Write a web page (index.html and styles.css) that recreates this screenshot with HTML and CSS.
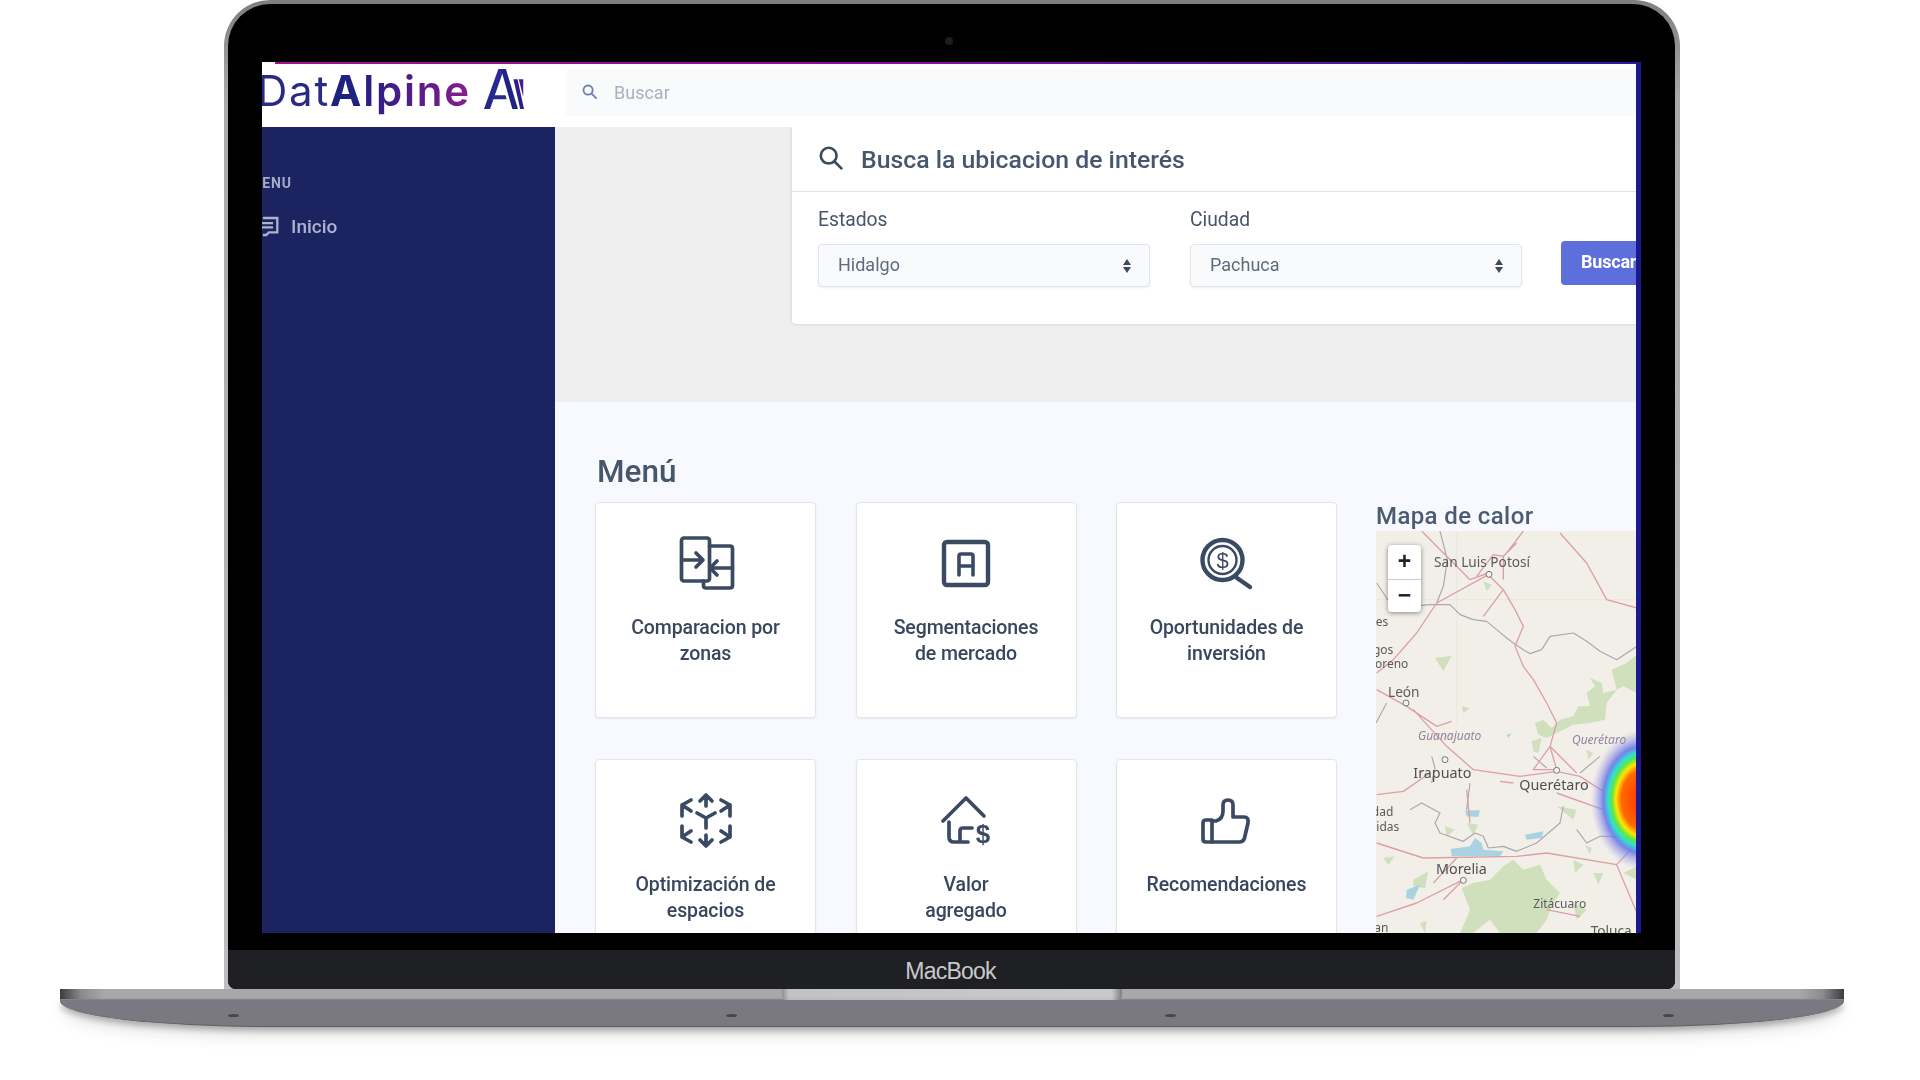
FILE: index.html
```html
<!DOCTYPE html>
<html lang="es">
<head>
<meta charset="utf-8">
<title>DatAlpine</title>
<link rel="stylesheet" href="styles.css">
</head>
<body>
<div class="laptop">
  <div class="lid">
    <div class="bezel">
      <span class="camera"></span>
      <div class="screen">
        <div class="top-line"></div>
        <header class="app-header">
          <div class="brand">
            <span class="logo-text"><span class="logo-thin">Dat</span><span class="logo-a">A</span><span class="logo-rest">lpine</span></span>
            <svg class="logo-mark" viewBox="700 40 106 110" preserveAspectRatio="none">
              <defs><linearGradient id="lg" x1="0" x2="1" y1="1" y2="0"><stop offset="0" stop-color="#1d2a86"/><stop offset="1" stop-color="#2f2a9a"/></linearGradient></defs>
              <path d="M700 150 L738 40 L753 40 L716 150 Z" fill="url(#lg)"/>
              <path d="M745 40 L758 40 L790 150 L775 150 Z" fill="#1f2384"/>
              <path d="M723 112 H757 L760 123 H719 Z" fill="#2b2a8c"/>
              <path d="M778 68 L789 68 L806 150 L796 150 Z" fill="#2a1f88"/>
              <path d="M792 68 H804 V116 Z" fill="#4a1d8c"/>
            </svg>
          </div>
          <div class="search-wrap">
            <div class="search-bar">
              <svg class="search-icon" viewBox="0 0 24 24"><circle cx="10" cy="10" r="6.5"/><path d="M15 15 L22 22"/></svg>
              <span class="search-text">Buscar</span>
            </div>
          </div>
        </header>
        <aside class="sidebar">
          <div class="side-label">MENU</div>
          <div class="side-item">
            <svg class="side-icon" viewBox="0 0 20 24"><path d="M1 2 H18 V19 H8 L5 22 H1 M-2 8 H13 M-2 13 H13"/></svg>
            <span>Inicio</span>
          </div>
        </aside>
        <main class="main">
          <section class="band">
            <div class="finder">
              <div class="finder-head">
                <svg class="finder-icon" viewBox="0 0 28 28"><circle cx="11.5" cy="11.5" r="8.5"/><path d="M18 18 L26 26"/></svg>
                <h2 class="finder-title">Busca la ubicacion de interés</h2>
              </div>
              <div class="finder-body">
                <div class="field">
                  <div class="field-label">Estados</div>
                  <div class="select"><span>Hidalgo</span><svg class="updown" viewBox="0 0 10 16"><path d="M5 1 L9 7 H1 Z M5 15 L1 9 H9 Z"/></svg></div>
                </div>
                <div class="field">
                  <div class="field-label">Ciudad</div>
                  <div class="select"><span>Pachuca</span><svg class="updown" viewBox="0 0 10 16"><path d="M5 1 L9 7 H1 Z M5 15 L1 9 H9 Z"/></svg></div>
                </div>
                <div class="btn">Buscar</div>
              </div>
            </div>
          </section>
          <section class="lower">
            <div class="menu-col">
              <h2 class="menu-title">Menú</h2>
              <div class="menu-grid">
                <div class="tile">
                  <svg class="tile-icon" viewBox="0 0 60 60"><rect x="5.5" y="5" width="28" height="43" rx="2.5"/><path d="M33.5 13 H54 Q56.5 13 56.5 15.5 V52.5 Q56.5 55 54 55 H30 Q27.5 55 27.5 52.5 V48"/><path d="M5.5 27 H26 M20 20 L27 27 L20 34 M56.5 35 H34 M41 28 L34 35 L41 42"/></svg>
                  <div class="tile-text">Comparacion por<br>zonas</div>
                </div>
                <div class="tile">
                  <svg class="tile-icon heavy" viewBox="0 0 60 60"><rect x="8" y="9" width="44" height="43" rx="3"/><path class="mid" d="M23 42 V23 Q23 21 25 21 H35 Q37 21 37 23 V42 M23 33 H37"/></svg>
                  <div class="tile-text">Segmentaciones<br>de mercado</div>
                </div>
                <div class="tile">
                  <svg class="tile-icon heavy" viewBox="0 0 60 60"><circle cx="25.5" cy="27" r="20"/><circle class="thin" cx="25.5" cy="27" r="14"/><path d="M40 45 L53 54"/><text class="icon-dollar" x="25.5" y="35">$</text></svg>
                  <div class="tile-text">Oportunidades de<br>inversión</div>
                </div>
                <div class="tile">
                  <svg class="tile-icon" viewBox="0 0 60 60"><path d="M30 28 V38 M30 28 L21 23 M30 28 L39 23 M30 6 V16 M24 11 L30 5 L36 11 M30 45 V55 M24 50 L30 56 L36 50 M6 26 V15 L15 10 M6 15 L15 21 M54 26 V15 L45 10 M54 15 L45 21 M6 36 V47 L15 52 M6 47 L15 41 M54 36 V47 L45 52 M54 47 L45 41"/></svg>
                  <div class="tile-text">Optimización de<br>espacios</div>
                </div>
                <div class="tile">
                  <svg class="tile-icon" viewBox="0 0 60 60"><path d="M7 31 L30 8 L48 26 M13 32 V47 Q13 52 18 52 H32 M36 38 H27 Q24 38 24 41 V52"/><text class="icon-dollar bold" x="47" y="53">$</text></svg>
                  <div class="tile-text">Valor<br>agregado</div>
                </div>
                <div class="tile">
                  <svg class="tile-icon" viewBox="0 0 60 60"><path d="M15 30 H9 Q6 30 6 33 V49 Q6 52 9 52 H15 Z"/><path d="M15 31 H19 Q26 29 26 21 V15 Q26 10 31 10 Q36 10 36 15 V27 H47 Q52 27 51 33 L47.500 48 Q46.500 52 42 52 H15"/></svg>
                  <div class="tile-text">Recomendaciones</div>
                </div>
              </div>
            </div>
            <div class="map-col">
              <h2 class="map-title">Mapa de calor</h2>
              <div class="map">
                <svg class="map-art" viewBox="48 124 783 1206" preserveAspectRatio="none">
                  <defs>
                    <radialGradient id="heat">
                      <stop offset="0" stop-color="#ff2a00"/>
                      <stop offset=".42" stop-color="#ff6a00"/>
                      <stop offset=".52" stop-color="#ffe600"/>
                      <stop offset=".6" stop-color="#5be84a"/>
                      <stop offset=".67" stop-color="#30e0d0"/>
                      <stop offset=".76" stop-color="#6a78e8" stop-opacity=".9"/>
                      <stop offset="1" stop-color="#b0a8ec" stop-opacity="0"/>
                    </radialGradient>
                  </defs>
                  <rect class="land" x="48" y="124" width="783" height="1206"/>
                  <path class="seam" d="M290 124 V700 M48 330 H831"/>
                  <g class="forest">
                    <path d="M225 505 L275 498 L250 545 Z"/>
                    <path d="M370 275 L395 285 L380 305 Z M305 650 L330 655 L310 670 Z"/>
                    <path d="M525 700 L550 690 L575 715 L600 690 L640 680 L655 650 L690 650 L680 610 L705 590 L690 565 L725 580 L730 610 L770 600 L740 640 L735 690 L690 700 L640 705 L590 730 L560 745 L535 735 Z"/>
                    <path d="M515 755 L545 745 L535 790 L520 785 Z"/>
                    <path d="M755 540 L800 520 L831 495 L831 610 L790 590 L770 600 Z"/>
                    <path d="M305 1195 L340 1180 L390 1170 L430 1130 L460 1110 L490 1140 L540 1125 L560 1170 L600 1210 L575 1250 L560 1290 L530 1330 L420 1330 L390 1290 L340 1330 L300 1330 L330 1260 Z"/>
                    <path d="M160 1170 L205 1145 L195 1195 L160 1190 Z"/>
                    <path d="M255 1010 L285 1020 L260 1040 Z M320 1000 L355 1005 L340 1035 Z"/>
                    <path d="M675 1065 L695 1075 L690 1095 Z M700 1150 L730 1150 L715 1185 Z M640 1240 L680 1260 L650 1290 Z"/>
                    <path d="M180 1300 L200 1295 L195 1330 Z M70 1105 L105 1100 L85 1125 Z"/>
                    <path d="M790 1150 L831 1130 L831 1170 Z M640 1110 L670 1125 L645 1150 Z"/>
                    <path d="M590 950 L650 960 L640 990 Z M680 780 L700 790 L685 810 Z"/>
                  </g>
                  <g class="lake">
                    <path d="M315 962 L360 962 L355 982 L320 980 Z"/>
                    <path d="M272 1078 L330 1070 L345 1045 L365 1060 L370 1080 L430 1085 L420 1100 L275 1100 Z"/>
                    <path d="M495 1035 L550 1025 L545 1045 L500 1050 Z M440 735 L455 730 L445 745 Z"/>
                    <path d="M140 1200 L180 1185 L160 1230 L138 1225 Z"/>
                  </g>
                  <g class="border">
                    <path d="M50 280 L90 340 L150 350 L210 345 L270 345 L300 375 L340 390 L380 395 L410 420 L440 445 L460 460 L490 480 L510 492 L545 480 L570 440 L640 430 L680 455 L720 485 L770 510 L831 470"/>
                    <path d="M240 124 L262 210 L250 290 L230 340"/>
                    <path d="M150 960 L185 940 L240 970 L225 1000 L240 1030 L310 1055 L345 1030 L370 1040 L385 1075 L430 1070 L470 1085 L530 1060 L600 1000 L610 950"/>
                    <path d="M650 1020 L680 1060 L720 1040 L780 1040 L831 1080"/>
                    <path d="M520 800 L560 835 M720 800 L660 850 M48 700 L80 640"/>
                    <path d="M215 800 L225 835 L215 880 M330 880 L320 960"/>
                  </g>
                  <g class="road">
                    <path d="M385 255 L430 300 L465 360 L490 410 L465 470 L490 530 L520 570 L560 640 L590 700 L570 770 L590 840"/>
                    <path d="M330 270 L385 250 M385 255 L230 340 L170 430 L100 510 L50 550"/>
                    <path d="M430 300 L370 380 M470 160 L430 200 L430 270 M490 124 L440 190 M185 124 L330 270 M350 260 L400 195 L430 200"/>
                    <path d="M600 130 L680 220 L740 330 L831 355"/>
                    <path d="M50 600 L140 650 L230 710 L275 695 M160 660 L260 770 L340 840 L480 860 L590 845 L660 860 L730 905"/>
                    <path d="M50 915 L130 905 L210 850 M590 910 L730 960 M570 770 L520 840 L590 840 M570 770 L650 850 M420 875 L460 880"/>
                    <path d="M50 1060 L190 1105 L470 1100 L560 1090 L770 1125 L831 1060 M770 1125 L831 1270"/>
                    <path d="M310 1170 L170 1240 L50 1280 M310 1170 L250 1230 M290 1105 L220 1180 M320 900 L330 1000 M560 1260 L660 1280"/>
                  </g>
                  <circle class="city" cx="387" cy="254" r="9"/>
                  <circle class="city" cx="138" cy="640" r="9"/>
                  <circle class="city" cx="255" cy="810" r="9"/>
                  <circle class="city" cx="590" cy="842" r="9"/>
                  <circle class="city" cx="310" cy="1172" r="9"/>
                  <ellipse cx="850" cy="930" rx="158" ry="212" fill="url(#heat)"/>
                  <text class="place" x="222" y="232">San Luis Potosí</text>
                  <text class="place" x="84" y="622">León</text>
                  <text class="place big" x="160" y="864">Irapuato</text>
                  <text class="place big" x="478" y="900">Querétaro</text>
                  <text class="place big" x="228" y="1153">Morelia</text>
                  <text class="place small" x="520" y="1256">Zitácuaro</text>
                  <text class="place" x="692" y="1338">Toluca</text>
                  <text class="state" x="174" y="752">Guanajuato</text>
                  <text class="state" x="636" y="764">Querétaro</text>
                  <text class="place small end" x="85" y="410">Aguascalientes</text>
                  <text class="place small end" x="100" y="492">Lagos</text>
                  <text class="place small end" x="145" y="536">de Moreno</text>
                  <text class="place small end" x="100" y="980">Ciudad</text>
                  <text class="place small end" x="118" y="1024">Hidas</text>
                  <text class="place small end" x="85" y="1326">Uruapan</text>
                </svg>
                <div class="zoom-ctl">
                  <div class="zoom-btn">+</div>
                  <div class="zoom-btn">−</div>
                </div>
              </div>
            </div>
          </section>
        </main>
      </div>
      <div class="black-strip"></div>
      <div class="chin">MacBook</div>
    </div>
  </div>
  <div class="base">
    <div class="base-top"></div>
    <div class="base-notch"></div>
    <div class="base-bottom">
      <span class="screw"></span><span class="screw"></span><span class="screw"></span><span class="screw"></span>
    </div>
  </div>
</div>
</body>
</html>
```
FILE: styles.css
```css
* { box-sizing: border-box; }
html, body { margin: 0; width: 1920px; height: 1080px; overflow: hidden; background: #fff; }
body { font-family: Roboto, "Liberation Sans", sans-serif; color: #3a4a60; }
h2 { margin: 0; font-weight: 500; }

.laptop { display: flex; flex-direction: column; align-items: flex-start; }

.lid {
  width: 1456px; height: 989px; margin-left: 224px; padding: 4px 5px 0 4px;
  border-radius: 46px 46px 0 0;
  background: linear-gradient(#7f7f81, #a9a9ab 10%, #bdbdbf);
}
.bezel {
  position: relative; height: 985px; padding: 58px 34px 0 34px;
  background: #000; border-radius: 42px 42px 8px 8px;
  display: flex; flex-direction: column;
}
.camera {
  position: absolute; left: 717px; top: 33px; width: 8px; height: 8px;
  border-radius: 50%; background: #1a1c22;
}
.screen {
  height: 871px; flex: none; overflow: hidden; background: #f8f9fe;
  border-right: 5px solid #1a1a8e; filter: blur(.45px);
  display: grid; grid-template-columns: 293px 1fr; grid-template-rows: 2px 63px 1fr;
}
.top-line { grid-column: 1 / 3; margin-left: 13px; background: linear-gradient(90deg, #a0108f, #8a0f9c 45%, #2a1aa0 100%); }
.black-strip { height: 17px; flex: none; }
.chin {
  flex: 1; margin: 0 -34px; background: #1f2024; border-radius: 0 0 8px 8px; color: #c9c9cb;
  font-family: "Liberation Sans", sans-serif; font-size: 23px; letter-spacing: -.8px;
  display: flex; align-items: center; justify-content: center; padding: 4px 2px 0 0;
}

.app-header { grid-column: 1 / 3; display: flex; background: #fff; min-width: 0; overflow: hidden; }
.brand { width: 304px; flex: none; display: flex; align-items: center; height: 100%; overflow: hidden; }
.logo-text {
  margin-left: -5px; font-family: Inter, "Open Sans", sans-serif; font-size: 42px; line-height: 56px;
  margin-top: -10px; white-space: nowrap; flex: none; width: 226px; letter-spacing: 1.8px;
}
.logo-thin { color: #2a2a86; font-weight: 400; }
.logo-a { color: #1d2280; font-weight: 700; }
.logo-rest {
  font-weight: 600;
  background: linear-gradient(90deg, #241f84, #5c1b8c 55%, #8a1f8c);
  -webkit-background-clip: text; background-clip: text; color: transparent;
}
.logo-mark { width: 40px; height: 40px; margin-left: 1px; margin-top: -14px; flex: none; }
.search-wrap { flex: 1; padding: 5px 0 11px; min-width: 0; }
.search-bar { height: 100%; background: #f8fafc; display: flex; align-items: center; padding-left: 15px; border-radius: 4px 0 0 4px; }
.search-icon { width: 17px; height: 17px; fill: none; stroke: #6f7fb0; stroke-width: 2.600; margin-top: -3px; }
.search-text { margin-left: 16px; font-size: 18px; color: #aab0bd; }

.sidebar { background: #1b2360; overflow: hidden; color: #aeb3cc; padding-top: 46px; }
.side-label { margin-left: -13px; font-size: 14px; line-height: 18px; margin-top: 1px; font-weight: 700; letter-spacing: .9px; color: #a6abc4; }
.side-item { display: flex; align-items: center; margin-top: 21px; height: 26px; font-size: 19px; font-weight: 500; }
.side-icon { width: 17px; height: 23px; flex: none; fill: none; stroke: #aeb3cc; stroke-width: 2.700; overflow: visible; }
.side-item span { margin-left: 12px; }

.main { display: flex; flex-direction: column; min-width: 0; min-height: 0; overflow: hidden; }
.band { height: 275px; flex: none; background: #efefef; padding-left: 237px; overflow: hidden; }
.finder {
  width: 1000px; height: 197px; background: #fff; border-radius: 0 0 0 4px;
  box-shadow: 0 0 3px rgba(60, 70, 90, .25);
}
.finder-head { height: 65px; display: flex; align-items: center; padding: 2px 0 0 26px; border-bottom: 1px solid #dfe3e8; }
.finder-icon { width: 26px; height: 26px; fill: none; stroke: #3c4a5e; stroke-width: 2.800; margin-top: -4px; }
.finder-title { margin-left: 17px; font-size: 24.800px; color: #46566c; line-height: 30px; }
.finder-body { display: flex; gap: 40px; padding: 16px 0 0 26px; align-items: flex-start; }
.field { width: 332px; }
.field-label { font-size: 19.300px; line-height: 24px; color: #46566c; margin-bottom: 12px; }
.select {
  height: 43px; display: flex; align-items: center; justify-content: space-between;
  padding: 0 17px 0 19px; background: #f8fafc; border: 1px solid #e2e6ea; border-radius: 4px;
  font-size: 18px; color: #5d6b7e; box-shadow: 0 1px 2px rgba(60, 70, 90, .08);
}
.select span { margin-top: -3px; }
.updown { width: 10px; height: 16px; fill: #3c4a5e; }
.btn {
  margin: 33px 0 0 -1px; width: 110px; height: 44px; padding: 0 0 4px 20px; flex: none;
  background: #5e6fdc; border-radius: 4px; color: #fff; font-size: 18px; font-weight: 700;
  display: flex; align-items: center; letter-spacing: -.2px;
}

.lower { flex: 1; min-height: 0; display: flex; padding-left: 40px; gap: 39px; }
.menu-col { width: 742px; flex: none; padding-top: 52px; }
.menu-title { font-size: 31.500px; line-height: 36px; font-weight: 500; color: #46566c; margin: 0 0 12px 2px; }
.menu-grid { display: grid; grid-template-columns: repeat(3, 221px); gap: 41px 39.500px; }
.tile {
  height: 216px; background: #fff; border: 1px solid #e2e5ea; border-radius: 4px; padding-top: 30px;
  display: flex; flex-direction: column; align-items: center; box-shadow: 0 1px 2px rgba(60, 70, 90, .08);
}
.tile-icon { width: 60px; height: 60px; flex: none; fill: none; stroke: #3b4a63; stroke-width: 3.700; stroke-linecap: round; stroke-linejoin: round; }
.tile-icon.heavy { stroke-width: 4.400; }
.tile-icon .thin { stroke-width: 2.400; }
.tile-icon .mid { stroke-width: 3.600; }
.icon-dollar { font-family: "Liberation Sans", sans-serif; font-size: 22px; fill: #3b4a63; stroke: none; text-anchor: middle; }
.icon-dollar.bold { font-size: 26px; font-weight: 700; }
.tile-text { margin-top: 22px; font-size: 19.500px; line-height: 26px; font-weight: 500; text-align: center; color: #38475c; letter-spacing: -.1px; }

.map-col { flex: 1; min-width: 0; padding-top: 99px; display: flex; flex-direction: column; min-height: 0; }
.map-title { font-size: 24px; line-height: 30px; color: #4b5b72; letter-spacing: .4px; }
.map { position: relative; flex: 1; min-height: 0; overflow: hidden; }
.map-art { display: block; width: 261px; height: 402px; }
.land { fill: #f2efe8; }
.seam { fill: none; stroke: #e6e2da; stroke-width: 2; }
.forest path { fill: #d0e0bc; }
.lake path { fill: #a9d3e2; }
.border path { fill: none; stroke: #aaa8ac; stroke-width: 3.500; stroke-linejoin: round; }
.road path { fill: none; stroke: #dc9fa9; stroke-width: 4; stroke-linejoin: round; }
.city { fill: #f6f3ec; stroke: #777; stroke-width: 3; }
.place { font-family: "Noto Sans", "Open Sans", sans-serif; font-size: 41px; fill: #5a5a5a; }
.place.big { font-size: 43px; fill: #505050; }
.place.small { font-size: 36px; }
.place.end { text-anchor: end; }
.state { font-family: "Noto Sans", "Open Sans", sans-serif; font-style: italic; font-size: 36px; fill: #94849e; }
.zoom-ctl {
  position: absolute; left: 12px; top: 14px; width: 33px; height: 67px; background: #fff;
  border-radius: 4px; box-shadow: 0 1px 5px rgba(0, 0, 0, .45);
}
.zoom-btn {
  height: 33.500px; display: flex; align-items: center; justify-content: center;
  font-family: "Liberation Sans", sans-serif; font-size: 23px; font-weight: 700; color: #222;
}
.zoom-btn + .zoom-btn { border-top: 1px solid #ccc; }

.base { position: relative; width: 1784px; margin-left: 60px; flex: none; }
.base-top {
  height: 11px;
  background: linear-gradient(90deg, #3c3c40 0, #8c8b90 1.200%, #a9a7ac 2.500%, #a9a7ac 97.500%, #8c8b90 98.800%, #3c3c40 100%);
  border-bottom: 1px solid #8a888e;
}
.base-notch {
  position: absolute; left: 722px; top: 0; width: 340px; height: 14px;
  background: linear-gradient(90deg, #8f8e92, #c2c1c4 2%, #c9c8cb 97%, #7d7c80);
  border-radius: 0 0 8px 8px;
}
.base-bottom {
  height: 27px; background: #7a7880; border-radius: 0 0 210px 210px / 0 0 26px 26px;
  border-bottom: 1px solid #5f5e64;
  box-shadow: 0 4px 6px rgba(0, 0, 0, .28), 0 10px 16px rgba(0, 0, 0, .1);
  position: relative;
  display: flex; padding: 14px 0 0 168px;
}
.screw { width: 11px; height: 3px; border-radius: 50%; background: #47464c; flex: none; }
.screw + .screw { margin-left: 487px; }
.screw:nth-child(3) { margin-left: 428px; }
```
